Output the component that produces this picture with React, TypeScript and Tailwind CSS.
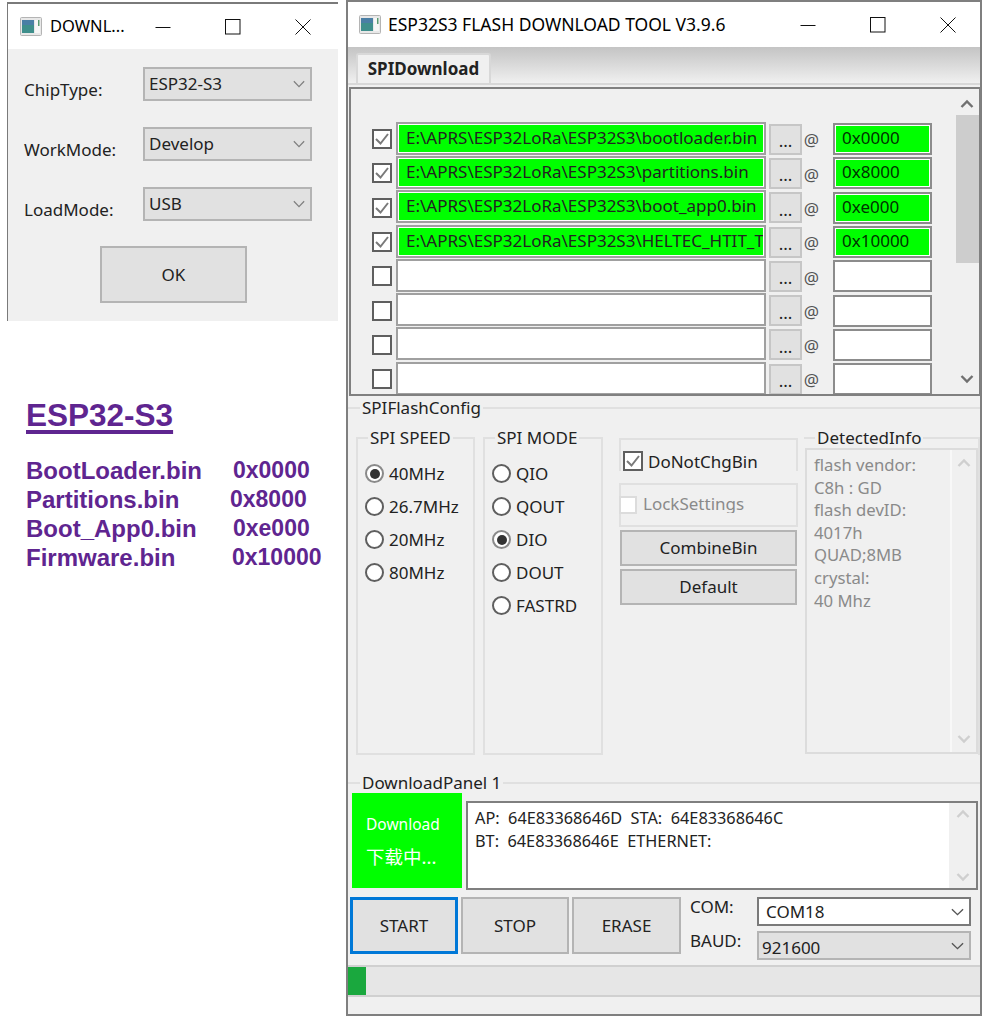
import type { ReactNode } from "react";

const files = [
  { path: "E:\\APRS\\ESP32LoRa\\ESP32S3\\bootloader.bin", addr: "0x0000", on: true },
  { path: "E:\\APRS\\ESP32LoRa\\ESP32S3\\partitions.bin", addr: "0x8000", on: true },
  { path: "E:\\APRS\\ESP32LoRa\\ESP32S3\\boot_app0.bin", addr: "0xe000", on: true },
  { path: "E:\\APRS\\ESP32LoRa\\ESP32S3\\HELTEC_HTIT_Tr", addr: "0x10000", on: true },
  { path: "", addr: "", on: false },
  { path: "", addr: "", on: false },
  { path: "", addr: "", on: false },
  { path: "", addr: "", on: false },
];

const offsets = [
  { name: "BootLoader.bin", addr: "0x0000", col: "w-[207px]" },
  { name: "Partitions.bin", addr: "0x8000", col: "w-[204px]" },
  { name: "Boot_App0.bin", addr: "0xe000", col: "w-[207px]" },
  { name: "Firmware.bin", addr: "0x10000", col: "w-[206px]" },
];

function AppIcon() {
  return (
    <svg width="22" height="19" viewBox="0 0 22 19" className="shrink-0">
      <rect x="0.5" y="0.5" width="21" height="18" rx="1" fill="#e8e8e8" stroke="#b4b4b4" />
      <rect x="2" y="3" width="12" height="13" fill="#3f8f8c" />
      <rect x="2" y="3" width="12" height="5" fill="#4a7fa5" />
      <rect x="15" y="3" width="5" height="13" fill="#f6f6f6" />
      <rect x="18" y="3" width="1.5" height="6" fill="#5a9a70" />
    </svg>
  );
}

function WindowButtons({ className }: { className: string }) {
  return (
    <div className={`flex items-center gap-[54px] ${className}`}>
      <svg width="16" height="16" viewBox="0 0 16 16">
        <path d="M0.5 8.5H15.5" stroke="#111" fill="none" />
      </svg>
      <svg width="16" height="16" viewBox="0 0 16 16">
        <rect x="0.5" y="0.5" width="14.5" height="14.5" stroke="#111" fill="none" />
      </svg>
      <svg width="16" height="16" viewBox="0 0 16 16">
        <path d="M0.5 0.5L15.5 15.5M15.5 0.5L0.5 15.5" stroke="#111" fill="none" />
      </svg>
    </div>
  );
}

function Combo({ text, className, textClass, small }: { text: string; className: string; textClass?: string; small?: boolean }) {
  return (
    <div className={`flex items-center justify-between border-2 ${className}`}>
      <span className={textClass}>{text}</span>
      <svg width={small ? 12 : 13} height="8" viewBox="0 0 14 9" preserveAspectRatio="none" className="shrink-0">
        <path d="M1 1.5L7 7.5L13 1.5" stroke={small ? "#808080" : "#555"} strokeWidth="1.5" fill="none" />
      </svg>
    </div>
  );
}

function Radio({ label, on }: { label: string; on?: boolean }) {
  return (
    <div className="flex h-[33px] items-center gap-[5px]">
      <span className={`flex size-[19px] items-center justify-center rounded-full border-2 ${on ? "border-[#8a8a8a]" : "border-[#5f5f5f]"} bg-white`}>
        {on && <span className="size-[10px] rounded-full bg-[#333]" />}
      </span>
      <span>{label}</span>
    </div>
  );
}

function Check({ on }: { on?: boolean }) {
  return (
    <span className="flex size-[20px] shrink-0 items-center justify-center border-2 border-[#5f5f5f] bg-white">
      {on && (
        <svg width="16" height="16" viewBox="0 0 16 16">
          <path d="M2 8L6.5 12.5L14 3" stroke="#7a7a7a" strokeWidth="2" fill="none" />
        </svg>
      )}
    </span>
  );
}

function Group({ label, className, children }: { label: string; className: string; children: ReactNode }) {
  return (
    <fieldset className={`border-2 border-[#e0e0e0] ${className}`}>
      <legend className="ml-[3px] px-[2px] leading-[20px]">{label}</legend>
      {children}
    </fieldset>
  );
}

function ArrowUp({ color = "#707070" }: { color?: string }) {
  return (
    <svg width="14" height="10" viewBox="0 0 14 10">
      <path d="M1.5 8L7 2.5L12.5 8" stroke={color} strokeWidth="2.4" fill="none" />
    </svg>
  );
}

function ArrowDown({ color = "#707070" }: { color?: string }) {
  return (
    <svg width="14" height="10" viewBox="0 0 14 10">
      <path d="M1.5 2L7 7.5L12.5 2" stroke={color} strokeWidth="2.4" fill="none" />
    </svg>
  );
}

function FileRow({ path, addr, on }: { path: string; addr: string; on: boolean }) {
  return (
    <div className="flex h-[34.3px] items-center">
      <span className="ml-[21px] mr-[4px] mt-[2px]">
        <Check on={on} />
      </span>
      <div className="h-[33px] w-[370px] border-2 border-[#a0a0a0] bg-white p-[1px]">
        <div className={`h-full overflow-hidden whitespace-nowrap pl-[7px] leading-[25px] ${on ? "bg-[#00ff00]" : "bg-white"}`}>
          {path}
        </div>
      </div>
      <div className="ml-[3px] mt-[2px] flex h-[31px] w-[33px] items-center justify-center border-2 border-[#c6c6c6] bg-[#e1e1e1] pt-[3px] leading-none">
        ...
      </div>
      <span className="mr-[12px] mt-[4px] w-[19px] text-center text-[#555]">@</span>
      <div className="mt-[2px] h-[32px] w-[99px] border-2 border-[#8c8c8c] bg-white p-[1px]">
        <div className={`h-full pl-[6px] leading-[24px] text-[#003300] ${on ? "bg-[#00ff00]" : "bg-white"}`}>{addr}</div>
      </div>
    </div>
  );
}

export default function App() {
  return (
    <div className="flex h-[1017px] w-[984px] overflow-hidden bg-white font-['Noto_Sans','Noto_Sans_CJK_SC',sans-serif] text-[17px] text-[#222]">
      {/* left column */}
      <div className="w-[346px] shrink-0 pl-[7px] pt-[2px]">
        <div className="h-[319px] w-[331px] border-l-[1px] border-t-2 border-l-[#7a7a7a] border-t-[#7a7a7a] bg-[#f0f0f0]">
          <div className="flex h-[45px] items-center bg-white pl-[12px] text-[16.5px] text-black">
            <AppIcon />
            <span className="ml-[8px] w-[100px]">DOWNL...</span>
            <WindowButtons className="ml-[5px]" />
          </div>
          <div className="flex flex-col pt-[18px]">
            {[
              ["ChipType:", "ESP32-S3"],
              ["WorkMode:", "Develop"],
              ["LoadMode:", "USB"],
            ].map(([label, value]) => (
              <div key={label} className="mb-[26px] flex h-[34px] items-center">
                <span className="ml-[16px] mt-[12px] w-[119px]">{label}</span>
                <Combo small text={value} className="h-[34px] w-[169px] border-[#b4b4b4] bg-[#e1e1e1] pl-[4px] pr-[5px]" />
              </div>
            ))}
            <div className="ml-[92px] -mt-[1px] flex h-[57px] w-[147px] items-center justify-center border-2 border-[#b4b4b4] bg-[#e1e1e1]">
              OK
            </div>
          </div>
        </div>
        <div className="pl-[19px] pt-[72px] font-['Liberation_Sans',sans-serif] font-bold text-[#5f2590]">
          <div className="text-[31.5px] leading-[44px] underline decoration-[4px] underline-offset-[4px]">ESP32-S3</div>
          <div className="mt-[19px] text-[24px] leading-[29px]">
            {offsets.map((o) => (
              <div key={o.name} className="flex whitespace-nowrap">
                <span className={o.col}>{o.name}</span>
                <span className="text-[23px]">{o.addr}</span>
              </div>
            ))}
          </div>
        </div>
      </div>

      {/* main window */}
      <div className="flex h-[1016px] w-[636px] shrink-0 flex-col border-2 border-[#7f7f7f] bg-[#f0f0f0]">
        <div className="flex h-[45px] shrink-0 items-center bg-white pl-[11px] text-[17.5px] text-black">
          <AppIcon />
          <span className="ml-[7px] w-[388px] whitespace-nowrap">ESP32S3 FLASH DOWNLOAD TOOL V3.9.6</span>
          <WindowButtons className="ml-[24px]" />
        </div>

        <div className="flex h-[38px] shrink-0 items-end border-b-2 border-[#d8d8d8] bg-gradient-to-b from-[#c4c4c4] to-[#f0f0f0] pl-[8px]">
          <div className="flex h-[30px] w-[135px] items-center justify-center rounded-t-[3px] border-x-2 border-t-2 border-[#d8d8d8] bg-[#f0f0f0] font-bold text-[#222]">
            SPIDownload
          </div>
        </div>

        <div className="ml-[1px] mt-[2px] flex h-[309px] w-[632px] shrink-0 overflow-hidden border-2 border-[#808080] bg-[#f0f0f0]">
          <div className="flex-1 pt-[32px]">
            {files.map((f, i) => (
              <FileRow key={i} path={f.path} addr={f.addr} on={f.on} />
            ))}
          </div>
          <div className="flex w-[25px] flex-col items-center pt-[10px]">
            <ArrowUp />
            <div className="ml-auto mt-[6px] h-[148px] w-[23px] bg-[#cdcdcd]" />
            <div className="mt-[111px]">
              <ArrowDown />
            </div>
          </div>
        </div>

        <fieldset className="mt-[1px] h-[371px] border-t-2 border-[#e0e0e0]">
          <legend className="ml-[12px] px-[2px] leading-[22px]">SPIFlashConfig</legend>
          <div className="ml-[8px] mt-[9px] flex h-[331px] items-start">
            <Group label="SPI SPEED" className="h-[327px] w-[119px] px-[7px]">
              <div className="pt-[9px]">
                {["40MHz", "26.7MHz", "20MHz", "80MHz"].map((s, i) => (
                  <Radio key={s} label={s} on={i === 0} />
                ))}
              </div>
            </Group>
            <Group label="SPI MODE" className="ml-[8px] h-[327px] w-[120px] px-[7px]">
              <div className="pt-[9px]">
                {["QIO", "QOUT", "DIO", "DOUT", "FASTRD"].map((s, i) => (
                  <Radio key={s} label={s} on={i === 2} />
                ))}
              </div>
            </Group>
            <div className="ml-[16px] mt-[10px] w-[179px]">
              <div className="flex h-[33px] items-end gap-[5px] border-x-2 border-t-2 border-[#e0e0e0] pl-[2px]">
                <Check on />
                <span className="-mb-[2px] leading-[23px]">DoNotChgBin</span>
              </div>
              <div className="mt-[12px] flex h-[44px] items-center gap-[6px] border-2 border-[#e0e0e0] text-[#8a8a8a]">
                <span className="-ml-[2px] size-[18px] border-2 border-[#dcdcdc] bg-white" />
                <span className="mb-[5px] h-[20px] overflow-hidden leading-[21px]">LockSettings</span>
              </div>
              <div className="ml-[1px] mt-[3px] flex h-[36px] w-[177px] items-center justify-center border-2 border-[#b4b4b4] bg-[#e1e1e1]">CombineBin</div>
              <div className="ml-[1px] mt-[3px] flex h-[36px] w-[177px] items-center justify-center border-2 border-[#b4b4b4] bg-[#e1e1e1]">Default</div>
            </div>
            <fieldset className="ml-[6px] h-[327px] w-[176px] border-t-2 border-r-2 border-[#e0e0e0]">
              <legend className="ml-[11px] px-[2px] leading-[20px]">DetectedInfo</legend>
              <div className="ml-[1px] flex h-[306px] w-[173px] border-2 border-[#dcdcdc] text-[16.7px] text-[#8a8a8a]">
                <div className="flex-1 pl-[7px] pt-[4px] leading-[22.6px]">
                  {["flash vendor:", "C8h : GD", "flash devID:", "4017h", "QUAD;8MB", "crystal:", "40 Mhz"].map((l) => (
                    <div key={l}>{l}</div>
                  ))}
                </div>
                <div className="flex w-[26px] flex-col items-center justify-between border-l-2 border-[#f8f8f8] py-[8px]">
                  <ArrowUp color="#cfcfcf" />
                  <ArrowDown color="#cfcfcf" />
                </div>
              </div>
            </fieldset>
          </div>
        </fieldset>

        <fieldset className="mt-[4px] border-t-2 border-[#e0e0e0]">
          <legend className="ml-[12px] px-[2px] leading-[21px]">DownloadPanel 1</legend>
          <div className="flex h-[97px] items-start pl-[4px]">
            <div className="flex h-[95px] w-[110px] flex-col justify-center gap-[11px] bg-[#00ff00] pl-[14px] text-white">
              <span className="text-[15.5px] leading-[22px]">Download</span>
              <span className="text-[18.5px] leading-[22px]">下载中...</span>
            </div>
            <div className="ml-[4px] mt-[8px] flex h-[89px] w-[512px] border-2 border-[#7f7f7f] bg-white">
              <div className="flex-1 whitespace-pre pl-[7px] pt-[4px] text-[16.3px] leading-[23px]">
                <div>AP:  64E83368646D  STA:  64E83368646C</div>
                <div>BT:  64E83368646E  ETHERNET:</div>
              </div>
              <div className="flex w-[27px] flex-col items-center justify-between bg-[#f0f0f0] py-[6px]">
                <ArrowUp color="#cfcfcf" />
                <ArrowDown color="#cfcfcf" />
              </div>
            </div>
          </div>
        </fieldset>

        <div className="mt-[7px] flex h-[60px] items-start pl-[2px]">
          <div className="flex h-[57px] w-[108px] items-center justify-center border-[3px] border-[#0078d7] bg-[#e1e1e1]">START</div>
          <div className="ml-[3px] flex h-[57px] w-[108px] items-center justify-center border-2 border-[#b4b4b4] bg-[#e1e1e1]">STOP</div>
          <div className="ml-[3px] flex h-[57px] w-[109px] items-center justify-center border-2 border-[#b4b4b4] bg-[#e1e1e1]">ERASE</div>
          <div className="ml-[9px] flex w-[67px] flex-col">
            <span className="-mt-[7px] leading-[34px]">COM:</span>
            <span className="leading-[34px]">BAUD:</span>
          </div>
          <div className="flex flex-col gap-[5px]">
            <Combo text="COM18" textClass="pt-[1px]" className="h-[29px] w-[214px] border-[#7a7a7a] bg-white pl-[7px] pr-[5px]" />
            <Combo text="921600" textClass="pt-[4px]" className="h-[29px] w-[214px] border-[#b4b4b4] bg-[#e1e1e1] pl-[3px] pr-[5px]" />
          </div>
        </div>

        <div className="mt-[8px] flex h-[32px] border-y-2 border-[#d0d0d0] bg-[#e6e6e6]">
          <div className="h-full w-[18px] bg-[#1aa83e]" />
        </div>
      </div>
    </div>
  );
}
